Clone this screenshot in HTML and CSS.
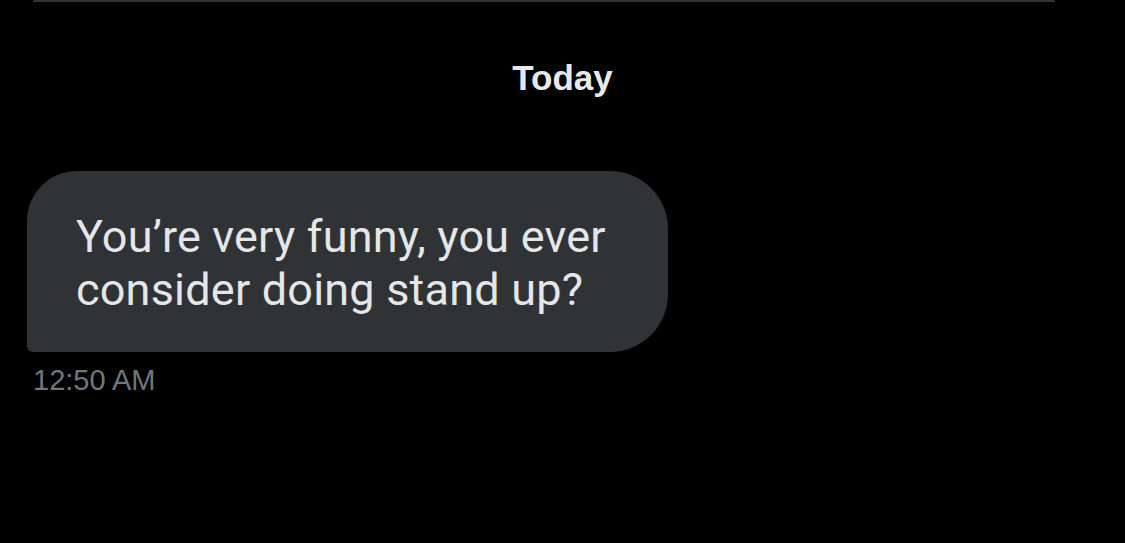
FILE: index.html
```html
<!DOCTYPE html>
<html>
<head>
<meta charset="utf-8">
<link rel="stylesheet" href="styles.css">
</head>
<body>
<div class="screen">
  <div class="rule"></div>
  <div class="day">Today</div>
  <div class="msg">
    <div class="bubble">You’re very funny, you ever<br>consider doing stand up?</div>
    <div class="time">12:50 AM</div>
  </div>
</div>
</body>
</html>
```
FILE: styles.css
```css
html, body {
  margin: 0;
  padding: 0;
  background: #000;
}
.screen {
  width: 1125px;
  height: 543px;
  overflow: hidden;
  display: flex;
  flex-direction: column;
}
.rule {
  margin: 0 70px 0 33px;
  height: 2px;
  background: #2f3336;
}
.day {
  margin-top: 56px;
  text-align: center;
  font-family: "Liberation Sans", Arial, sans-serif;
  font-weight: bold;
  font-size: 35px;
  line-height: 40px;
  color: #e7e9ea;
}
.msg {
  margin: 73px 0 0 27px;
  display: flex;
  flex-direction: column;
  align-items: flex-start;
}
.bubble {
  background: #2f3336;
  color: #e4e6e7;
  font-family: Roboto, "Noto Sans", sans-serif;
  font-size: 45px;
  line-height: 53px;
  letter-spacing: 0.2px;
  padding: 39px 62px 36px 49px;
  border-radius: 50px 58px 58px 6px;
}
.time {
  margin: 12px 0 0 6px;
  font-family: "Liberation Sans", Arial, sans-serif;
  font-size: 29px;
  line-height: 32px;
  color: #71767b;
}
```
